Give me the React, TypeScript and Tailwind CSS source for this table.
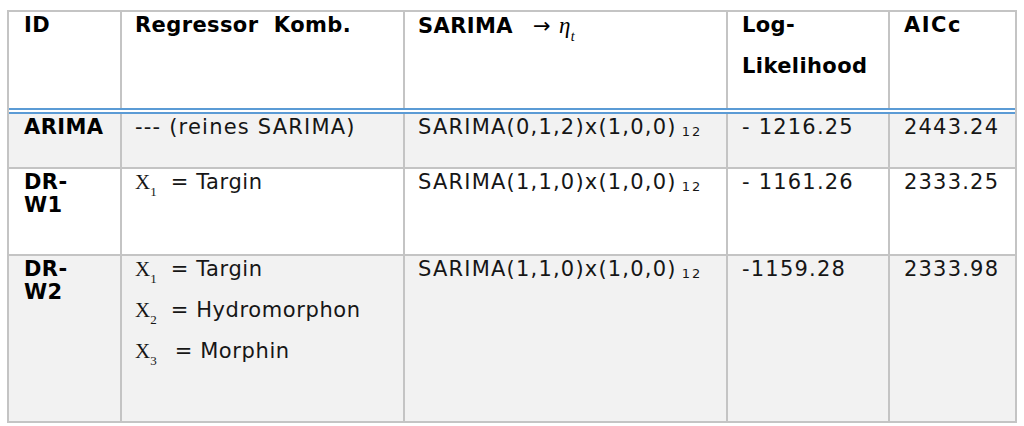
import React from 'react';

// Table layout: column widths include the 2px right border of each cell
const cols = ['w-[113px] pl-[15px]', 'w-[283px] pl-[13px]', 'w-[323px] pl-[13px]', 'w-[162px] pl-[14px]', 'flex-1 pl-[14px]'];

const Xvar = ({ n, gap = 'mr-[14px]' }: { n: string; gap?: string }) => (
  <span className={`font-['Liberation_Serif',serif] text-[21px] tracking-normal ${gap}`}>
    X<sub className="text-[13px] align-[-4px]">{n}</sub>
  </span>
);

const Lag = () => (
  <span className="text-[13px] tracking-[2px] ml-[5px] align-[-2px]">12</span>
);

const Cell = ({ i, last, children }: { i: number; last?: boolean; children?: React.ReactNode }) => (
  <div className={`${cols[i]} ${last ? '' : 'border-r-2 border-[#c4c4c4]'} pt-[2px] pr-1 flex flex-col gap-[18px] whitespace-nowrap`}>
    {children}
  </div>
);

const rows = [
  {
    id: ['ARIMA'],
    reg: [<span key="a">--- (reines SARIMA)</span>],
    model: '(0,1,2)x(1,0,0)',
    ll: '- 1216.25',
    aic: '2443.24',
    bg: 'bg-[#f2f2f2]',
    h: 'h-[55px] border-b-2',
  },
  {
    id: ['DR-', 'W1'],
    reg: [<span key="a" className="tracking-[0.6px]"><Xvar n="1" />= Targin</span>],
    model: '(1,1,0)x(1,0,0)',
    ll: '- 1161.26',
    aic: '2333.25',
    bg: 'bg-white',
    h: 'h-[87px] border-b-2',
  },
  {
    id: ['DR-', 'W2'],
    reg: [
      <span key="a" className="tracking-[0.6px]"><Xvar n="1" />= Targin</span>,
      <span key="b" className="tracking-[0.6px]"><Xvar n="2" />= Hydromorphon</span>,
      <span key="c" className="tracking-[0.6px]"><Xvar n="3" gap="mr-[18px]" />= Morphin</span>,
    ],
    model: '(1,1,0)x(1,0,0)',
    ll: '-1159.28',
    aic: '2333.98',
    bg: 'bg-[#f2f2f2]',
    h: 'h-[165px]',
  },
];

export default function App() {
  return (
    <div className="w-[1024px] h-[426px] bg-white pt-[10px] pl-[7px] font-['DejaVu_Sans',sans-serif] text-[21px] leading-[23px] text-[#161616]">
      <div className="w-[1010px] border-2 border-[#c4c4c4]">
        {/* header */}
        <div className="flex h-[102px] border-b-[6px] border-double border-[#5b9bd5] font-bold text-black tracking-[0.4px]">
          <Cell i={0}><span>ID</span></Cell>
          <Cell i={1}><span>Regressor&nbsp; Komb.</span></Cell>
          <Cell i={2}>
            <span>
              SARIMA<span className="font-normal ml-[20px]">→</span>
              <span className="font-['Liberation_Serif',serif] italic font-normal text-[23px] ml-[8px]">
                η<sub className="text-[14px] align-[-4px]">t</sub>
              </span>
            </span>
          </Cell>
          <Cell i={3}>
            <span>Log-</span>
            <span>Likelihood</span>
          </Cell>
          <Cell i={4} last><span className="tracking-[1.5px]">AICc</span></Cell>
        </div>

        {rows.map((r) => (
          <div key={r.id.join('')} className={`flex ${r.h} border-[#c4c4c4] ${r.bg} tracking-[1.2px]`}>
            <div className={`${cols[0]} border-r-2 border-[#c4c4c4] pt-[2px] font-bold text-black tracking-[0.4px]`}>
              {r.id.map((t) => (
                <div key={t}>{t}</div>
              ))}
            </div>
            <Cell i={1}>{r.reg}</Cell>
            <Cell i={2}>
              <span>SARIMA{r.model}<Lag /></span>
            </Cell>
            <Cell i={3}><span>{r.ll}</span></Cell>
            <Cell i={4} last><span>{r.aic}</span></Cell>
          </div>
        ))}
      </div>
    </div>
  );
}
